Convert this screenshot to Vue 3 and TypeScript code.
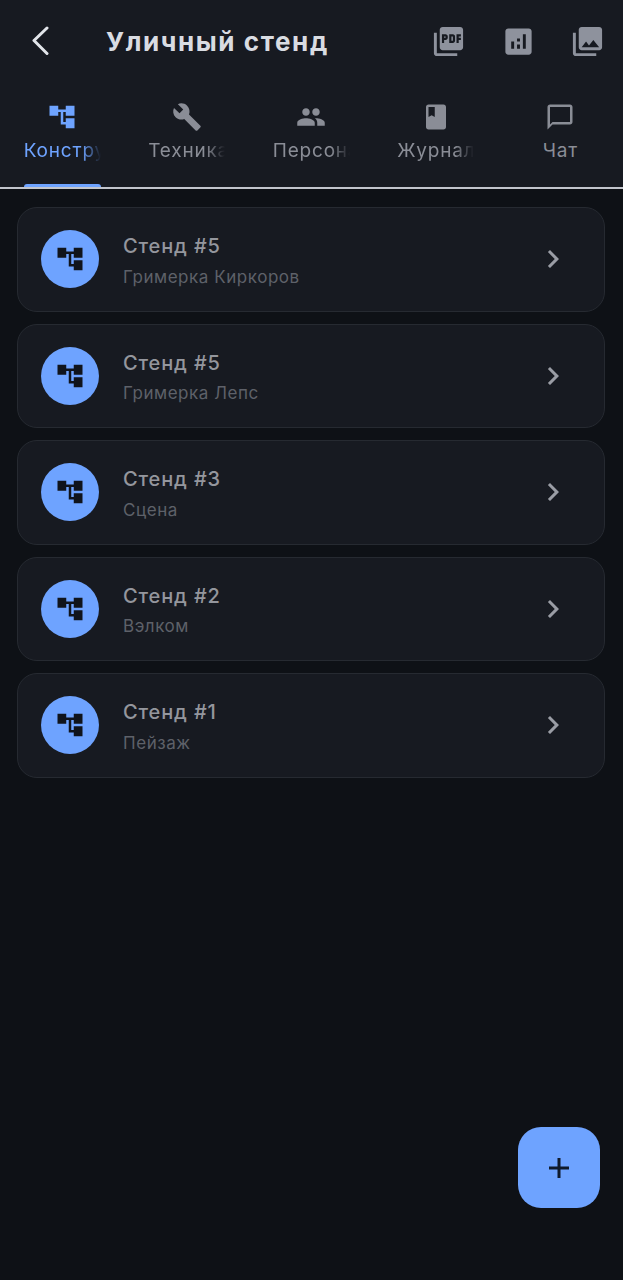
<script setup lang="ts">
const treePath = 'M22 11V3h-7v3H9V3H2v8h7V8h2v10h4v3h7v-8h-7v3h-2V8h2v3z'

interface Tab {
  label: string
  path: string
  active?: boolean
  clipped?: boolean
}

const tabs: Tab[] = [
  { label: 'Конструкция', path: treePath, active: true, clipped: true },
  {
    label: 'Техника',
    path: 'M22.7 19l-9.1-9.1c.9-2.3.4-5-1.5-6.9-2-2-5-2.4-7.4-1.3L9 6 6 9 1.6 4.7C.4 7.1.9 10.1 2.9 12.1c1.9 1.9 4.6 2.4 6.9 1.5l9.1 9.1c.4.4 1 .4 1.4 0l2.3-2.3c.5-.4.5-1.1.1-1.4z',
    clipped: true,
  },
  {
    label: 'Персонал',
    path: 'M16 11c1.66 0 2.99-1.34 2.99-3S17.66 5 16 5c-1.66 0-3 1.34-3 3s1.34 3 3 3zm-8 0c1.66 0 2.99-1.34 2.99-3S9.66 5 8 5C6.34 5 5 6.34 5 8s1.34 3 3 3zm0 2c-2.33 0-7 1.17-7 3.5V19h14v-2.5c0-2.33-4.67-3.5-7-3.5zm8 0c-.29 0-.62.02-.97.05 1.16.84 1.97 1.97 1.97 3.45V19h6v-2.5c0-2.33-4.67-3.5-7-3.5z',
    clipped: true,
  },
  {
    label: 'Журнал',
    path: 'M18 2H6c-1.1 0-2 .9-2 2v16c0 1.1.9 2 2 2h12c1.1 0 2-.9 2-2V4c0-1.1-.9-2-2-2zM6 4h5v8l-2.5-1.5L6 12V4z',
    clipped: true,
  },
  {
    label: 'Чат',
    path: 'M20 2H4c-1.1 0-2 .9-2 2v18l4-4h14c1.1 0 2-.9 2-2V4c0-1.1-.9-2-2-2zm0 14H6l-2 2V4h16v12z',
  },
]

const actions: string[] = [
  'M20 2H8c-1.1 0-2 .9-2 2v12c0 1.1.9 2 2 2h12c1.1 0 2-.9 2-2V4c0-1.1-.9-2-2-2zm-8.5 7.5c0 .83-.67 1.5-1.5 1.5H9v2H7.5V7H10c.83 0 1.5.67 1.5 1.5v1zm5 2c0 .83-.67 1.5-1.5 1.5h-2.5V7H15c.83 0 1.5.67 1.5 1.5v3zm4-3H19v1h1.5V11H19v2h-1.5V7h3v1.5zM9 9.5h1v-1H9v1zM4 6H2v14c0 1.1.9 2 2 2h14v-2H4V6zm10 5.5h1v-3h-1v3z',
  'M19 3H5c-1.1 0-2 .9-2 2v14c0 1.1.9 2 2 2h14c1.1 0 2-.9 2-2V5c0-1.1-.9-2-2-2zM9 17H7v-5h2v5zm4 0h-2v-3h2v3zm0-5h-2v-2h2v2zm4 5h-2V7h2v10z',
  'M22 16V4c0-1.1-.9-2-2-2H8c-1.1 0-2 .9-2 2v12c0 1.1.9 2 2 2h12c1.1 0 2-.9 2-2zm-11-4l2.03 2.71L16 11l4 5H8l3-4zM2 6v14c0 1.1.9 2 2 2h14v-2H4V6H2z',
]

const stands = [
  { title: 'Стенд #5', sub: 'Гримерка Киркоров' },
  { title: 'Стенд #5', sub: 'Гримерка Лепс' },
  { title: 'Стенд #3', sub: 'Сцена' },
  { title: 'Стенд #2', sub: 'Вэлком' },
  { title: 'Стенд #1', sub: 'Пейзаж' },
]
</script>

<template>
  <div class="page">
    <header class="head">
      <div class="topbar">
        <button class="back" aria-label="Назад">
          <svg width="18" height="30" viewBox="0 0 18 30">
            <path d="M15 2 L2 14.5 L15 27.5" fill="none" stroke="currentColor" stroke-width="3" stroke-linecap="round" stroke-linejoin="round" />
          </svg>
        </button>
        <h1 class="title">Уличный стенд</h1>
        <div class="actions">
          <svg v-for="(p, i) in actions" :key="i" class="action" viewBox="0 0 24 24" width="35" height="35">
            <path :d="p" fill="currentColor" />
          </svg>
        </div>
      </div>
      <nav class="tabs">
        <div v-for="t in tabs" :key="t.label" class="tab" :class="{ active: t.active }">
          <svg class="tab-icon" viewBox="0 0 24 24" width="30" height="30">
            <path :d="t.path" fill="currentColor" />
          </svg>
          <span class="tab-label" :class="{ clipped: t.clipped }">{{ t.label }}</span>
          <span v-if="t.active" class="indicator"></span>
        </div>
      </nav>
    </header>

    <main class="list">
      <article v-for="(s, i) in stands" :key="i" class="card">
        <div class="avatar">
          <svg viewBox="0 0 24 24" width="30" height="30">
            <path :d="treePath" fill="currentColor" />
          </svg>
        </div>
        <div class="texts">
          <div class="card-title">{{ s.title }}</div>
          <div class="card-sub">{{ s.sub }}</div>
        </div>
        <svg class="chevron" viewBox="0 0 24 24" width="36" height="36">
          <path d="M10 6L8.59 7.41 13.17 12l-4.58 4.59L10 18l6-6z" fill="currentColor" />
        </svg>
      </article>
    </main>

    <button class="fab" aria-label="Добавить">
      <svg width="22" height="22" viewBox="0 0 22 22">
        <path d="M11 1v20M1 11h20" stroke="currentColor" stroke-width="3" fill="none" />
      </svg>
    </button>
  </div>
</template>

<style>
html,
body {
  margin: 0;
  background: #0e1116;
}
</style>

<style scoped>
.page {
  position: relative;
  width: 623px;
  height: 1280px;
  overflow: hidden;
  background: #0e1116;
  font-family: Inter, "Noto Sans", sans-serif;
}
.head {
  background: #171a21;
  border-bottom: 2px solid #c2c5cc;
  box-sizing: border-box;
  height: 189px;
  display: flex;
  flex-direction: column;
}
.topbar {
  display: flex;
  align-items: center;
  height: 82px;
  padding: 0 18px 0 32px;
}
.back {
  display: flex;
  padding: 0;
  border: 0;
  background: none;
  color: #e2e5ea;
  width: 18px;
}
.title {
  margin: 0 0 0 56px;
  font-size: 26px;
  font-weight: 700;
  letter-spacing: 1.6px;
  color: #d9dce2;
  flex: 1;
  white-space: nowrap;
}
.actions {
  display: flex;
  gap: 34.5px;
}
.action {
  color: #8e929d;
  display: block;
}
.tabs {
  display: flex;
  flex: 1;
}
.tab {
  position: relative;
  flex: 0 0 124.5px;
  display: flex;
  flex-direction: column;
  align-items: center;
  color: #8a8d96;
  padding-top: 20px;
  box-sizing: border-box;
}
.tab.active {
  color: #6ea3ff;
}
.tab-icon {
  display: block;
}
.tab-label {
  display: block;
  margin-top: 7px;
  font-size: 19px;
  line-height: 24px;
  letter-spacing: 0.8px;
  white-space: nowrap;
  max-width: 77px;
  overflow: hidden;
}
.tab-label.clipped {
  width: 77px;
  -webkit-mask-image: linear-gradient(to right, #000 75%, transparent 100%);
  mask-image: linear-gradient(to right, #000 75%, transparent 100%);
}
.indicator {
  position: absolute;
  bottom: 0;
  left: 24px;
  width: 77px;
  height: 3px;
  background: #6ea3ff;
  border-radius: 3px 3px 0 0;
}
.list {
  display: flex;
  flex-direction: column;
  gap: 12px;
  padding: 18px 18px 0 17px;
}
.card {
  box-sizing: border-box;
  height: 104.5px;
  display: flex;
  align-items: center;
  padding: 0 33px 0 23px;
  background: #171a21;
  border: 1px solid #262a31;
  border-radius: 20px;
}
.avatar {
  flex: none;
  width: 58px;
  height: 58px;
  border-radius: 50%;
  background: #6ea3ff;
  color: #10141c;
  display: flex;
  align-items: center;
  justify-content: center;
}
.texts {
  flex: 1;
  margin-left: 24px;
  padding-top: 4.5px;
  display: flex;
  flex-direction: column;
  gap: 6.5px;
}
.card-title {
  font-size: 20px;
  line-height: 24px;
  font-weight: 500;
  letter-spacing: 0.85px;
  color: #94969d;
}
.card-sub {
  font-size: 17px;
  line-height: 24px;
  letter-spacing: 0.55px;
  color: #5e6169;
}
.chevron {
  flex: none;
  color: #9a9da5;
  display: block;
}
.fab {
  position: absolute;
  left: 518px;
  top: 1127px;
  width: 82px;
  height: 81px;
  border: 0;
  padding: 0;
  border-radius: 23px;
  background: #6ea3ff;
  color: #0f1a2c;
  display: flex;
  align-items: center;
  justify-content: center;
}
</style>
